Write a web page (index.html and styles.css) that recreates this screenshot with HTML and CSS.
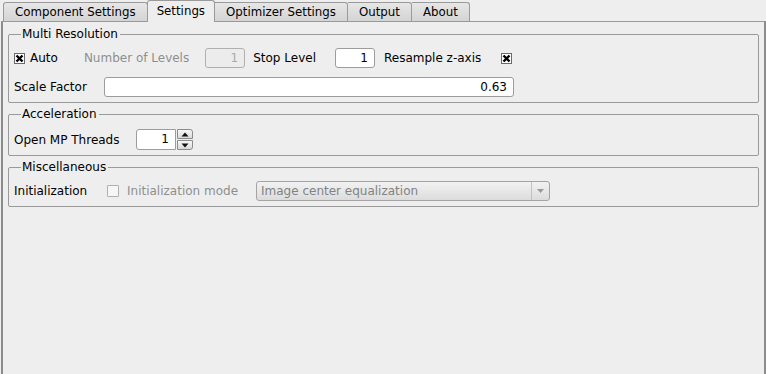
FILE: index.html
```html
<!DOCTYPE html>
<html lang="en">
<head>
  <meta charset="UTF-8" />
  <title>Settings</title>
  <link rel="stylesheet" href="styles.css">
</head>
<body>

  <!-- Sekme çubuğu -->
  <div class="tabs">
    <div class="tab tab-first">Component Settings</div>
    <div class="tab active">Settings</div>
    <div class="tab">Optimizer Settings</div>
    <div class="tab">Output</div>
    <div class="tab">About</div>
  </div>

  <div class="panel">

    <fieldset class="group group-multi">
      <legend>Multi Resolution</legend>
      <div class="row">
        <span class="check checked"><svg viewBox="0 0 9 9"><path d="M1.5 1.5 L7.5 7.5 M7.5 1.5 L1.5 7.5" /></svg></span>
        <span class="label auto">Auto</span>
        <span class="label disabled levels">Number of Levels</span>
        <span class="field field-small field-disabled">1</span>
        <span class="label stop">Stop Level</span>
        <span class="field field-small">1</span>
        <span class="label resample">Resample z-axis</span>
        <span class="check checked"><svg viewBox="0 0 9 9"><path d="M1.5 1.5 L7.5 7.5 M7.5 1.5 L1.5 7.5" /></svg></span>
      </div>
      <div class="row">
        <span class="label scale">Scale Factor</span>
        <span class="field field-wide">0.63</span>
      </div>
    </fieldset>

    <fieldset class="group group-accel">
      <legend>Acceleration</legend>
      <div class="row row-spin">
        <span class="label threads">Open MP Threads</span>
        <span class="field field-spin">1</span>
        <span class="spinner">
          <span class="spin-btn"><svg viewBox="0 0 8 5"><path d="M0.5 4.5 L4 0.5 L7.5 4.5 Z" /></svg></span>
          <span class="spin-btn"><svg viewBox="0 0 8 5"><path d="M0.5 0.5 L4 4.5 L7.5 0.5 Z" /></svg></span>
        </span>
      </div>
    </fieldset>

    <fieldset class="group">
      <legend>Miscellaneous</legend>
      <div class="row">
        <span class="label init">Initialization</span>
        <span class="check check-disabled"></span>
        <span class="label disabled mode">Initialization mode</span>
        <span class="select">
          <span class="select-text">Image center equalization</span>
          <span class="select-arrow"><svg viewBox="0 0 7 4"><path d="M0 0 L7 0 L3.5 4 Z" /></svg></span>
        </span>
      </div>
    </fieldset>

  </div>

</body>
</html>
```

FILE: styles.css
```css
* {
  margin: 0;
  padding: 0;
  box-sizing: border-box;
}

html, body {
  height: 100%;
  overflow: hidden;
}

body {
  background: #eeeeee;
  color: #000;
  font-family: "DejaVu Sans", "Liberation Sans", sans-serif;
  font-size: 12px;
  display: flex;
  flex-direction: column;
}

/* Sekmeler */
.tabs {
  display: flex;
  align-items: flex-end;
  height: 21px;
  padding-left: 3px;
  position: relative;
  z-index: 2;
  font-size: 11.8px;
}

.tab {
  height: 19px;
  line-height: 18px;
  padding: 0 11px;
  border: 1px solid #9a9a9a;
  border-bottom: none;
  border-left: none;
  border-radius: 0 3px 0 0;
  background: linear-gradient(#e6e6e6, #d4d4d4);
  white-space: nowrap;
}

.tab-first {
  border-left: 1px solid #9a9a9a;
  border-radius: 3px 3px 0 0;
}

.tab.active {
  height: 22px;
  margin-bottom: -1px;
  line-height: 20px;
  padding: 0 9px;
  background: #eeeeee;
  border-left: 1px solid #9a9a9a;
  border-radius: 3px 3px 0 0;
  margin-left: -1px;
}

.panel {
  flex: 1;
  border-top: 1px solid #9a9a9a;
  border-left: 2px solid #8c8c8c;
  border-right: 2px solid #8c8c8c;
  margin-left: 1px;
  padding: 5px 5px 0 5px;
}

/* Gruplar */
.group {
  border: 1px solid #9a9a9a;
  border-radius: 2px;
  padding: 7px 0 5px 5px;
  margin-bottom: 5px;
  min-width: 0;
}

.group-multi {
  margin-bottom: 4px;
}

.group-accel {
  padding-top: 8px;
  margin-bottom: 4px;
}

.group legend {
  font-size: 12px;
  line-height: 14px;
  padding: 0 2px 0 1px;
  margin-left: 7px;
}

.group-multi .row + .row {
  margin-top: 9px;
}

.row {
  display: flex;
  align-items: center;
  height: 20px;
}

.row-spin {
  height: 21px;
}

.label {
  white-space: nowrap;
}

.disabled {
  color: #8e8e8e;
}

.auto { margin-left: 5px; }
.levels { margin-left: 26px; }
.stop { margin-left: 8px; }
.resample { margin-left: 9px; }
.resample + .check { margin-left: 20px; }
.scale { width: 90px; }
.threads { width: 122px; }
.init { width: 93px; }
.mode { margin-left: 8px; width: 129px; }

/* Onay kutuları */
.check {
  width: 11px;
  height: 11px;
  border: 1px solid #6a6a6a;
  background: #fff;
  display: inline-flex;
  align-items: center;
  justify-content: center;
  flex: none;
}

.check svg {
  width: 9px;
  height: 9px;
}

.check svg path {
  stroke: #000;
  stroke-width: 2.4;
  fill: none;
}

.check-disabled {
  width: 12px;
  height: 12px;
  border-color: #b0b0b0;
  background: #f6f6f6;
  border-radius: 1px;
}

/* Alanlar */
.field {
  height: 20px;
  line-height: 18px;
  border: 1px solid #9c9c9c;
  border-radius: 3px;
  background: #fff;
  text-align: right;
  padding: 0 6px;
  flex: none;
}

.field-small {
  width: 40px;
  margin-left: 19px;
}

.field-disabled {
  margin-left: 16px;
  background: #ececec;
  color: #aaa;
  border-color: #b0b0b0;
  width: 40px;
}

.field-wide {
  width: 410px;
}

.field-spin {
  width: 40px;
  height: 21px;
  line-height: 19px;
  border-radius: 3px 0 0 3px;
}

.spinner {
  display: flex;
  flex-direction: column;
  margin-left: 1px;
  height: 21px;
}

.spin-btn {
  width: 16px;
  height: 10px;
  border: 1px solid #8c8c8c;
  background: linear-gradient(#f7f7f7, #dadada);
  display: flex;
  align-items: center;
  justify-content: center;
}

.spin-btn:first-child {
  border-radius: 0 3px 0 0;
  margin-bottom: 1px;
}

.spin-btn:last-child {
  border-radius: 0 0 3px 0;
}

.spin-btn svg {
  width: 8px;
  height: 5px;
  fill: #111;
}

/* Açılır liste */
.select {
  display: flex;
  width: 294px;
  height: 20px;
  border: 1px solid #a4a4a4;
  border-radius: 3px;
  background: linear-gradient(#f2f2f2, #dcdcdc);
  color: #828282;
}

.select-text {
  flex: 1;
  line-height: 18px;
  padding-left: 4px;
}

.select-arrow {
  width: 18px;
  border-left: 1px solid #c2c2c2;
  display: flex;
  align-items: center;
  justify-content: center;
}

.select-arrow svg {
  width: 7px;
  height: 4px;
  fill: #9a9a9a;
}
```
